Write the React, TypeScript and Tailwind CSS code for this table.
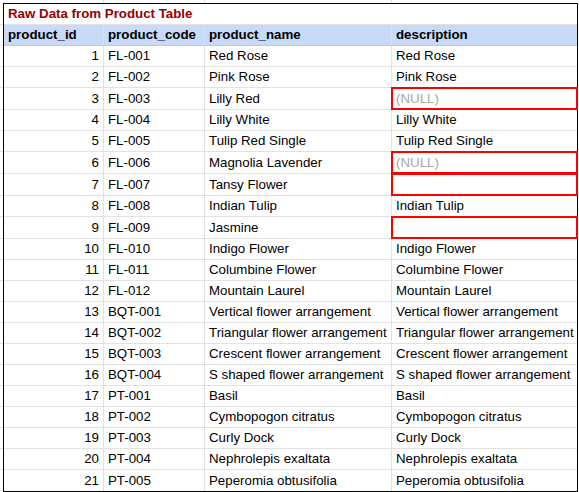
import React from "react";

type Row = { id: number; code: string; name: string; desc: string | null; flag?: boolean };

const rows: Row[] = [
  { id: 1, code: "FL-001", name: "Red Rose", desc: "Red Rose" },
  { id: 2, code: "FL-002", name: "Pink Rose", desc: "Pink Rose" },
  { id: 3, code: "FL-003", name: "Lilly Red", desc: null, flag: true },
  { id: 4, code: "FL-004", name: "Lilly White", desc: "Lilly White" },
  { id: 5, code: "FL-005", name: "Tulip Red Single", desc: "Tulip Red Single" },
  { id: 6, code: "FL-006", name: "Magnolia Lavender", desc: null, flag: true },
  { id: 7, code: "FL-007", name: "Tansy Flower", desc: "", flag: true },
  { id: 8, code: "FL-008", name: "Indian Tulip", desc: "Indian Tulip" },
  { id: 9, code: "FL-009", name: "Jasmine", desc: "", flag: true },
  { id: 10, code: "FL-010", name: "Indigo Flower", desc: "Indigo Flower" },
  { id: 11, code: "FL-011", name: "Columbine Flower", desc: "Columbine Flower" },
  { id: 12, code: "FL-012", name: "Mountain Laurel", desc: "Mountain Laurel" },
  { id: 13, code: "BQT-001", name: "Vertical flower arrangement", desc: "Vertical flower arrangement" },
  { id: 14, code: "BQT-002", name: "Triangular flower arrangement", desc: "Triangular flower arrangement" },
  { id: 15, code: "BQT-003", name: "Crescent flower arrangement", desc: "Crescent flower arrangement" },
  { id: 16, code: "BQT-004", name: "S shaped flower arrangement", desc: "S shaped flower arrangement" },
  { id: 17, code: "PT-001", name: "Basil", desc: "Basil" },
  { id: 18, code: "PT-002", name: "Cymbopogon citratus", desc: "Cymbopogon citratus" },
  { id: 19, code: "PT-003", name: "Curly Dock", desc: "Curly Dock" },
  { id: 20, code: "PT-004", name: "Nephrolepis exaltata", desc: "Nephrolepis exaltata" },
  { id: 21, code: "PT-005", name: "Peperomia obtusifolia", desc: "Peperomia obtusifolia" },
];

// col widths incl. right gridline
const cols = "grid-cols-[100px_101px_187px_185px]";

export default function App() {
  return (
    <div
      className="w-[579px] h-[492px] bg-white text-black overflow-hidden"
      style={{ fontFamily: '"Liberation Sans", Arial, sans-serif' }}
    >
      {/* sheet gridlines peeking above the box */}
      <div className="flex h-[3px] pl-[4px]">
        <div className="w-[100px] border-r border-[#e2e2e2]" />
        <div className="w-[101px] border-r border-[#e2e2e2]" />
        <div className="w-[187px] border-r border-[#e2e2e2]" />
      </div>
      <div className="flex">
        <div className="w-[3px] flex flex-col">
          <div className="h-[22px] border-b border-[#e2e2e2]" />
          <div className="h-[21px] border-b border-[#e2e2e2]" />
          {rows.map((r) => (
            <div key={r.id} className={`${r.flag ? "h-[22px]" : "h-[21px]"} border-b border-[#e2e2e2]`} />
          ))}
        </div>
        <div className="w-[575px] border border-black">
          <div className="h-[21px] border-b border-[#e2e2e2] flex items-center pl-[4px] text-[13.3px] font-bold text-[#990000]">
            Raw Data from Product Table
          </div>
          <div className={`grid ${cols} h-[21px] bg-[#c9daf8] border-b border-[#b7c8e6] text-[13.3px] font-bold`}>
            <div className="border-r border-[#d5e1f7] pl-[4px] flex items-center">product_id</div>
            <div className="border-r border-[#d5e1f7] pl-[4px] flex items-center">product_code</div>
            <div className="border-r border-[#d5e1f7] pl-[4px] flex items-center">product_name</div>
            <div className="pl-[4px] flex items-center">description</div>
          </div>
          {rows.map((r) => (
            <div
              key={r.id}
              className={`grid ${cols} ${r.flag ? "h-[22px]" : "h-[21px]"} border-b border-[#e2e2e2] text-[13.3px] last:border-b-0`}
            >
              <div className="border-r border-[#e2e2e2] pr-[4px] flex items-center justify-end">{r.id}</div>
              <div className="border-r border-[#e2e2e2] pl-[4px] flex items-center whitespace-nowrap">{r.code}</div>
              <div className="border-r border-[#e2e2e2] pl-[4px] flex items-center whitespace-nowrap overflow-hidden">{r.name}</div>
              <div className="relative pl-[4px] flex items-center whitespace-nowrap overflow-visible">
                {r.desc === null ? <span className="text-[#a8a8a8]">(NULL)</span> : r.desc}
                {r.flag && (
                  <div className="absolute left-[-1px] right-[-1px] top-[-1px] bottom-[-1px] border-2 border-[#ff0000]" />
                )}
              </div>
            </div>
          ))}
        </div>
      </div>
    </div>
  );
}
